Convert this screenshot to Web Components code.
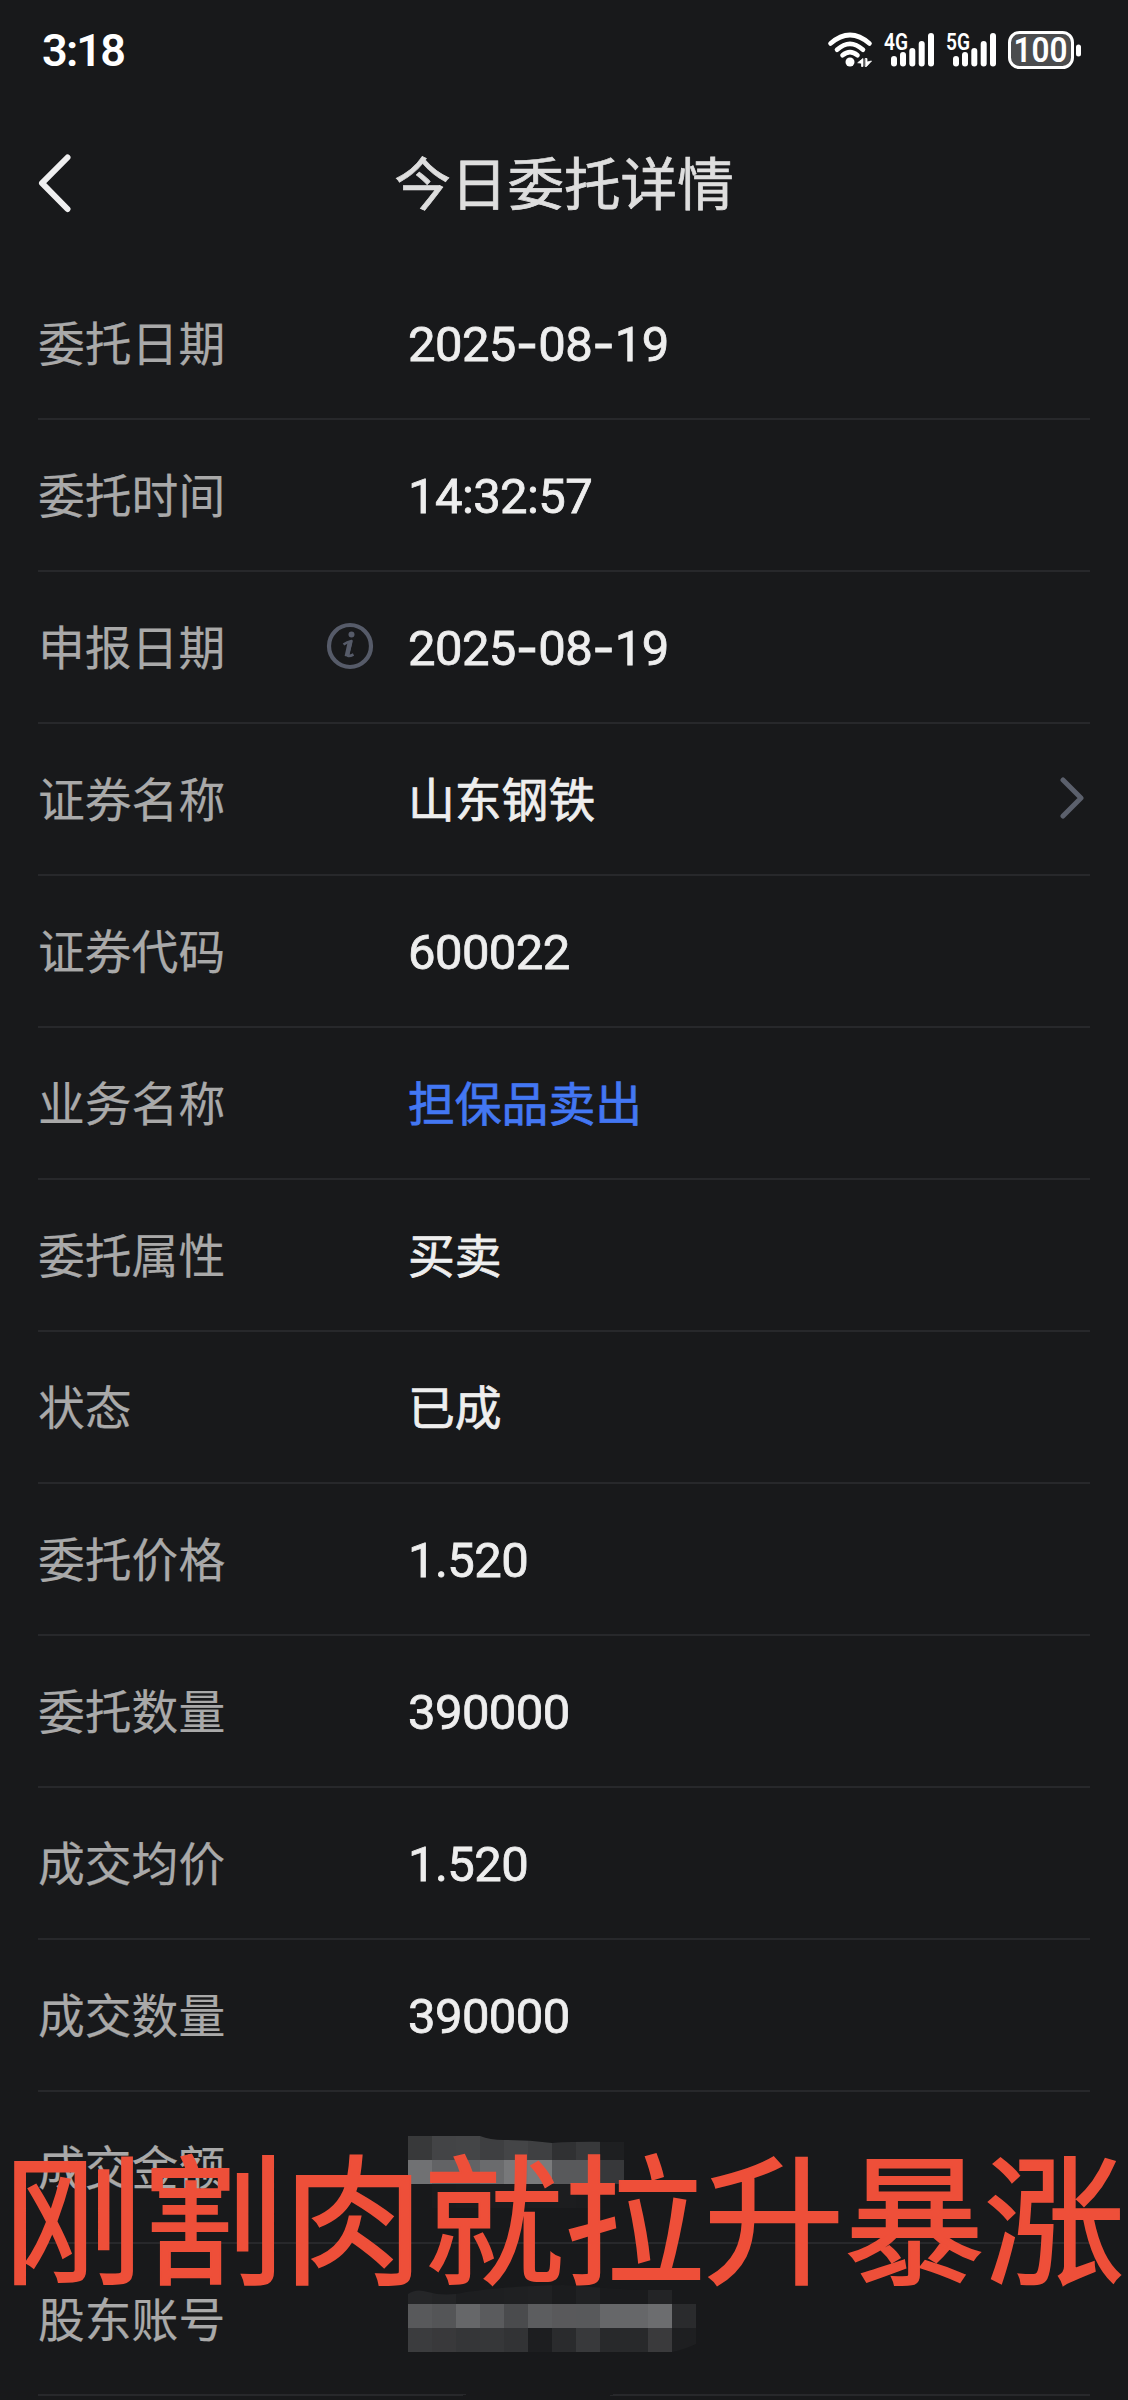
<!DOCTYPE html>
<html lang="zh-CN">
<head>
<meta charset="UTF-8">
<meta name="viewport" content="width=device-width, initial-scale=1">
<title>今日委托详情</title>
<style>
  html, body {
    margin: 0;
    background: #18191b;
  }
  body {
    width: 1128px;
    height: 2400px;
    overflow: hidden;
    font-family: Roboto, "Noto Sans CJK SC", sans-serif;
  }
</style>
</head>
<body>
<order-page>
  <status-bar time="3:18" battery="100"></status-bar>
  <page-header>今日委托详情</page-header>
  <detail-row label="委托日期">2025-08-19</detail-row>
  <detail-row label="委托时间">14:32:57</detail-row>
  <detail-row label="申报日期" info>2025-08-19</detail-row>
  <detail-row label="证券名称" link>山东钢铁</detail-row>
  <detail-row label="证券代码">600022</detail-row>
  <detail-row label="业务名称" accent>担保品卖出</detail-row>
  <detail-row label="委托属性">买卖</detail-row>
  <detail-row label="状态">已成</detail-row>
  <detail-row label="委托价格">1.520</detail-row>
  <detail-row label="委托数量">390000</detail-row>
  <detail-row label="成交均价">1.520</detail-row>
  <detail-row label="成交数量">390000</detail-row>
  <detail-row label="成交金额"><pixel-mask kind="amount"></pixel-mask></detail-row>
  <detail-row label="股东账号"><pixel-mask kind="account"></pixel-mask></detail-row>
  <big-caption slot="overlay">刚割肉就拉升暴涨</big-caption>
</order-page>

<script>
class OrderPage extends HTMLElement {
  constructor() {
    super();
    this.attachShadow({ mode: 'open' }).innerHTML = `
      <style>
        :host {
          display: block;
          position: relative;
          height: 2400px;
          overflow: hidden;
          background: #18191b;
        }
        main {
          display: flex;
          flex-direction: column;
        }
      </style>
      <main><slot></slot></main>
      <slot name="overlay"></slot>
    `;
  }
}

class SignalBars extends HTMLElement {
  constructor() {
    super();
    this.attachShadow({ mode: 'open' });
  }

  connectedCallback() {
    this.shadowRoot.innerHTML = `
      <style>
        :host { display: block; width: 50px; height: 36px; }
        svg { display: block; overflow: visible; }
        text { font: 600 23px Roboto, sans-serif; }
      </style>
      <svg width="50" height="36" viewBox="0 0 50 36" fill="#fff">
        <text x="0" y="17.5" textLength="24" lengthAdjust="spacingAndGlyphs">${this.getAttribute('network')}</text>
        <rect x="7" y="24" width="6" height="10.5" rx="3"/>
        <rect x="16" y="20" width="6" height="14.5" rx="3"/>
        <rect x="25.3" y="16" width="6" height="18.5" rx="3"/>
        <rect x="34.7" y="9" width="6" height="25.5" rx="3"/>
        <rect x="44" y="1" width="6" height="33.5" rx="3"/>
      </svg>
    `;
  }
}

class StatusBar extends HTMLElement {
  constructor() {
    super();
    this.attachShadow({ mode: 'open' });
  }

  connectedCallback() {
    this.shadowRoot.innerHTML = `
      <style>
        :host {
          display: flex;
          align-items: center;
          justify-content: space-between;
          box-sizing: border-box;
          height: 100px;
          padding: 0 47px 0 42px;
          color: #fff;
        }
        .time {
          font-size: 45px;
          font-weight: 600;
          letter-spacing: -1.8px;
        }
        .icons {
          display: flex;
          align-items: center;
        }
        svg { display: block; overflow: visible; }
        .wifi { margin-right: 12px; }
        signal-bars { margin-right: 12px; }
        .battery text { font: 600 35px Roboto, sans-serif; }
      </style>
      <div class="time">${this.getAttribute('time')}</div>
      <div class="icons">
        <svg class="wifi" width="44" height="36" viewBox="0 0 44 36" fill="none" stroke="#fff" stroke-width="4.6" stroke-linecap="round">
          <path d="M2.5 11.5Q22 -5.5 41.500 11.500M9 17.800Q22 5.800 35 17.800M14.500 23.300Q22 17 29.500 23.300"/>
          <circle cx="22" cy="30" r="4.500" fill="#fff" stroke="none"/>
          <path d="M30 30.500L35 26.500V34.500H33.500V31.500ZM37.500 26.500H39V30L43.500 29L38.500 34.500H37.500Z" stroke="#fff" stroke-width=".8" fill="#fff"/>
        </svg>
        <signal-bars network="4G"></signal-bars>
        <signal-bars network="5G"></signal-bars>
        <svg class="battery" width="73" height="38" viewBox="0 0 73 38">
          <rect x="1.500" y="1.500" width="63" height="35" rx="10" fill="#4b4c4e" stroke="#fff" stroke-width="3"/>
          <rect x="68" y="13.500" width="5" height="12" rx="2.500" fill="#fff"/>
          <text x="5.500" y="31" textLength="54" lengthAdjust="spacingAndGlyphs" fill="#fff">${this.getAttribute('battery')}</text>
        </svg>
      </div>
    `;
  }
}

class PageHeader extends HTMLElement {
  constructor() {
    super();
    this.attachShadow({ mode: 'open' }).innerHTML = `
      <style>
        :host {
          display: grid;
          grid-template-columns: 100px 1fr 100px;
          align-items: center;
          height: 168px;
          box-sizing: border-box;
          padding-bottom: 2px;
          color: #dedede;
        }
        svg { display: block; margin-left: 36px; }
        h1 {
          margin: 0;
          padding-top: 5px;
          font-size: 56.6px;
          font-weight: 400;
          -webkit-text-stroke: .013em;
          line-height: 80px;
          text-align: center;
          white-space: nowrap;
        }
      </style>
      <svg width="38" height="60" viewBox="0 0 38 60" fill="none" stroke="#efeff0" stroke-width="6" stroke-linecap="round" stroke-linejoin="round">
        <path d="M31.500 4.500L6 30.200L31.500 56"/>
      </svg>
      <h1><slot></slot></h1>
    `;
  }
}

class DetailRow extends HTMLElement {
  constructor() {
    super();
    this.attachShadow({ mode: 'open' });
  }

  connectedCallback() {
    const info = `
      <svg class="info" width="48" height="48" viewBox="0 0 48 48">
        <circle cx="24" cy="24" r="21" fill="none" stroke="#565b69" stroke-width="4.200"/>
        <circle cx="25.500" cy="12.500" r="3" fill="#565b69"/>
        <path d="M17.500 22.500Q21 20 25.500 19L22 32.500Q21.500 35.500 27.500 32.500" fill="none" stroke="#565b69" stroke-width="2.600" stroke-linejoin="round"/>
        <path d="M24 20L20.800 34.500" stroke="#565b69" stroke-width="4.500"/>
      </svg>`;
    const arrow = `
      <svg class="arrow" width="26" height="44" viewBox="0 0 26 44" fill="none" stroke="#5b606c" stroke-width="5" stroke-linecap="round" stroke-linejoin="round">
        <path d="M3 4L21 22L3 40"/>
      </svg>`;

    this.shadowRoot.innerHTML = `
      <style>
        :host {
          display: grid;
          grid-template-columns: 288px 82px 1fr auto;
          align-items: center;
          box-sizing: border-box;
          height: 152px;
          margin: 0 38px;
          border-bottom: 2px solid #27282b;
          -webkit-text-stroke: .013em;
        }
        .label {
          padding-top: 3px;
          font-size: 46.8px;
          line-height: 60px;
          color: #a9a9a9;
          white-space: nowrap;
        }
        .value {
          padding-top: 3px;
          font-size: 46.8px;
          line-height: 60px;
          color: #eee;
          white-space: nowrap;
          -webkit-text-stroke: .016em;
        }
        .value.mask { padding-top: 0; }
        .value.number {
          font-size: 49px;
          letter-spacing: -.6px;
        }
        .dash {
          font-family: Inter, sans-serif;
          letter-spacing: 0;
        }
        :host([accent]) .value { color: #4377f3; }
        svg { display: block; }
        .info, .arrow { margin-bottom: 2px; }
        .arrow { margin-right: 4px; }
      </style>
      <div class="label">${this.getAttribute('label')}</div>
      <div>${this.hasAttribute('info') ? info : ''}</div>
      <div class="value">${this.valueMarkup()}</div>
      <div>${this.hasAttribute('link') ? arrow : ''}</div>
    `;
    const value = this.shadowRoot.querySelector('.value');
    value.classList.toggle('number', /^[\d.:-]+$/.test(this.textContent));
    value.classList.toggle('mask', this.childElementCount > 0);
  }

  // dates get a wider dash than the digits' own font has
  valueMarkup() {
    const text = this.textContent;
    if (text.includes('-')) {
      return text.split('-').join('<span class="dash">-</span>');
    }
    return '<slot></slot>';
  }
}

// 24px grey blocks drawn over private values
const masks = {
  amount: {
    top: 44,
    clip: 'M0 44H72Q82 48 96 48Q120 48 144 51Q160 49 216 50V116H0Z',
    rows: [
      ['#38393a', '#434446', '#444547', '#3e3f41', '#444547', '#3f4042', '#303133', '#38393b', '#1e1f21'],
      ['#707173', '#626365', '#626365', '#6a6b6d', '#77787a', '#7a7b7c', '#58595b', '#58595b', '#37383a'],
      ['#18191b', '#1a1b1d', '#1b1c1e', '#1b1c1e', '#1b1c1e', '#1c1d1f', '#1c1d1f', '#1b1c1e', '#18191b'],
    ],
  },
  account: {
    top: 36,
    clip: 'M0 50Q8 44 20 48Q38 53 58 48Q100 42 155 41Q200 44 230 46H288V100Q275 106 264 108H0Z',
    rows: [
      ['#252628', '#232426', '#1d1e20', '#1e1f21', '#1f2022', '#202123', '#1b1c1e', '#202123', '#1a1b1d', '#1a1b1d', '#232426', '#18191b'],
      ['#58595b', '#545557', '#666769', '#5a5b5d', '#4a4b4d', '#5c5d5f', '#59595b', '#58595b', '#666769', '#666769', '#6c6d6f', '#2a2b2d'],
      ['#3b3c3e', '#39393b', '#353638', '#363739', '#323335', '#1d1e20', '#2a2b2d', '#38393b', '#28292b', '#28292b', '#3a3a3c', '#1e1f21'],
    ],
  },
};

class PixelMask extends HTMLElement {
  constructor() {
    super();
    this.attachShadow({ mode: 'open' });
  }

  connectedCallback() {
    const kind = this.getAttribute('kind');
    const mask = masks[kind];
    const cells = mask.rows.map((row, r) => row.map((fill, c) =>
      `<rect x="${c * 24}" y="${mask.top + r * 24}" width="24" height="24" fill="${fill}"/>`
    ).join('')).join('');

    this.shadowRoot.innerHTML = `
      <style>
        :host { display: block; width: 300px; height: 150px; }
        svg { display: block; overflow: visible; }
      </style>
      <svg width="300" height="150" viewBox="0 0 300 150" shape-rendering="crispEdges">
        <clipPath id="edge"><path d="${mask.clip}"/></clipPath>
        <g clip-path="url(#edge)">${cells}</g>
        ${kind === 'account' ? '<path d="M54 152L62 149H210L200 152Z" fill="#18191b"/>' : ''}
      </svg>
    `;
  }
}

class BigCaption extends HTMLElement {
  constructor() {
    super();
    this.attachShadow({ mode: 'open' }).innerHTML = `
      <style>
        :host {
          position: absolute;
          left: 3px;
          top: 2125px;
          font-size: 140.2px;
          -webkit-text-stroke: .014em;
          line-height: 200px;
          color: #ee4f39;
          white-space: nowrap;
        }
      </style>
      <slot></slot>
    `;
  }
}

customElements.define('order-page', OrderPage);
customElements.define('signal-bars', SignalBars);
customElements.define('status-bar', StatusBar);
customElements.define('page-header', PageHeader);
customElements.define('pixel-mask', PixelMask);
customElements.define('detail-row', DetailRow);
customElements.define('big-caption', BigCaption);
</script>
</body>
</html>
